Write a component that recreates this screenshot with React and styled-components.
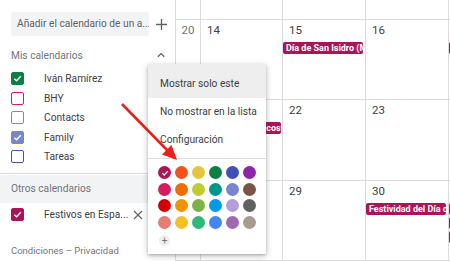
import styled, { createGlobalStyle } from "styled-components";

const GlobalStyle = createGlobalStyle`
  html, body {
    margin: 0;
    padding: 0;
    background: #fff;
    font-family: Roboto, "Noto Sans", Arial, sans-serif;
  }
`;

const myCalendars = [
  { name: "Iván Ramírez", color: "#0b8043", checked: true },
  { name: "BHY", color: "#d81b60", checked: false },
  { name: "Contacts", color: "#7986cb", checked: false },
  { name: "Family", color: "#7986cb", checked: true },
  { name: "Tareas", color: "#3f51b5", checked: false },
];

const palette = [
  "#ad1457", "#f4511e", "#e4c441", "#0b8043", "#3f51b5", "#8e24aa",
  "#d81b60", "#ef6c00", "#c0ca33", "#009688", "#7986cb", "#795548",
  "#d50000", "#f09300", "#7cb342", "#039be5", "#b39ddb", "#616161",
  "#e67c73", "#f6bf26", "#33b679", "#4285f4", "#9e69af", "#a79b8e",
];

// rows of the month grid: week number + 4 visible days
const weeks = [
  { height: 20, week: "", days: [{}, {}, {}, {}] },
  {
    height: 80,
    week: "20",
    days: [
      { num: "14" },
      { num: "15", events: ["Día de San Isidro (Madrid)"] },
      { num: "16" },
      { num: "17", events: ["Día de las Letras Gallegas"] },
    ],
  },
  {
    height: 81,
    week: "21",
    days: [
      { num: "21", events: ["Lunes de Pentecostés"] },
      { num: "22" },
      { num: "23" },
      { num: "24" },
    ],
  },
  {
    height: 80,
    week: "22",
    days: [
      { num: "28" },
      { num: "29" },
      { num: "30", events: ["Festividad del Día de Canarias"] },
      { num: "31", events: ["Corpus Christi", "Día de Castilla-La Mancha", "Corpus Christi (Castilla)"] },
    ],
  },
];

const Page = styled.div`
  position: relative;
  display: flex;
  width: 450px;
  height: 261px;
  overflow: hidden;
  background: #fff;
`;

const Sidebar = styled.div`
  display: flex;
  flex-direction: column;
  width: 175px;
  flex-shrink: 0;
`;

const SearchRow = styled.div`
  display: flex;
  align-items: center;
  gap: 7px;
  padding: 12px 0 0 11px;
`;

const SearchBox = styled.div`
  width: 138px;
  height: 24px;
  box-sizing: border-box;
  padding-left: 6px;
  background: #f1f3f4;
  border-radius: 2px;
  color: #5f6368;
  font-size: 10.2px;
  line-height: 24px;
  white-space: nowrap;
  overflow: hidden;
`;

const SectionHeader = styled.div`
  display: flex;
  align-items: center;
  justify-content: space-between;
  height: 26px;
  padding: 0 10px 0 11px;
  margin-top: 6px;
  color: #70757a;
  font-size: 10.2px;
  background: ${({ $shaded }) => ($shaded ? "#f1f3f4" : "transparent")};
`;

const CalList = styled.div`
  display: flex;
  flex-direction: column;
  padding-top: 1px;
`;

const CalRow = styled.div`
  display: flex;
  align-items: center;
  height: 19.5px;
  padding: 0 0 0 11px;
  color: #3c4043;
  font-size: 10.2px;
`;

const CalName = styled.span`
  margin-left: 20px;
  white-space: nowrap;
`;

const Box = styled.span`
  display: flex;
  align-items: center;
  justify-content: center;
  width: 13px;
  height: 13px;
  flex-shrink: 0;
  box-sizing: border-box;
  border-radius: 2px;
  border: 1.6px solid ${({ $color }) => $color};
  background: ${({ $checked, $color }) => ($checked ? $color : "#fff")};
`;

const Divider = styled.div`
  height: 1px;
  background: #dadce0;
  margin-top: 6px;
  width: 148px;
`;

const OtherHeader = styled(SectionHeader)`
  margin-top: 1px;
  height: 28px;
`;

const FestRow = styled(CalRow)`
  margin-top: 1px;
  height: 22px;
`;

const CloseSlot = styled.span`
  display: flex;
  margin-left: 5px;
`;

const Footer = styled.div`
  margin-top: auto;
  padding: 0 0 5px 11px;
  color: #70757a;
  font-size: 9.5px;
`;

const Grid = styled.div`
  display: grid;
  grid-template-columns: 25px 82px 83px 83px 83px;
  grid-auto-rows: min-content;
  border-left: 1px solid #dadce0;
  flex-shrink: 0;
`;

const Cell = styled.div`
  box-sizing: border-box;
  height: ${({ $h }) => $h}px;
  border-right: 1px solid #dadce0;
  border-bottom: 1px solid #dadce0;
  overflow: hidden;
`;

const WeekNum = styled.div`
  text-align: center;
  padding-top: 2px;
  font-size: 11.5px;
  line-height: 16px;
  color: #70757a;
`;

const DayNum = styled.div`
  padding: 2px 0 0 6px;
  font-size: 11.5px;
  line-height: 16px;
  color: #3c4043;
`;

const Events = styled.div`
  display: flex;
  flex-direction: column;
  gap: 2px;
  margin-top: 4px;
`;

const Chip = styled.div`
  width: 80px;
  height: 12px;
  box-sizing: border-box;
  padding-left: 3px;
  background: #ad1457;
  border-radius: 2px;
  color: #fff;
  font-size: 9px;
  font-weight: 700;
  line-height: 12px;
  white-space: nowrap;
  overflow: hidden;
`;

const Menu = styled.div`
  position: absolute;
  left: 148px;
  top: 64px;
  width: 118px;
  height: 190px;
  background: #fff;
  box-shadow: 0 2px 6px rgba(60, 64, 67, 0.35), 0 1px 2px rgba(60, 64, 67, 0.2);
  display: flex;
  flex-direction: column;
`;

const MenuItem = styled.div`
  height: 28px;
  line-height: 28px;
  padding: ${({ $first }) => ($first ? "6px" : "0")} 0 0 12px;
  background: ${({ $active }) => ($active ? "#eeeeee" : "transparent")};
  color: #3c4043;
  font-size: 10.2px;
  white-space: nowrap;
`;

const MenuDivider = styled.div`
  height: 1px;
  background: #dadce0;
  margin-top: 4px;
`;

const Swatches = styled.div`
  display: grid;
  grid-template-columns: repeat(6, 13px);
  column-gap: 4px;
  row-gap: 3.5px;
  padding: 7px 0 0 10px;
`;

const Swatch = styled.div`
  width: 13px;
  height: 13px;
  border-radius: 50%;
  background: ${({ $color }) => $color};
  display: flex;
  align-items: center;
  justify-content: center;
`;

const AddSwatch = styled.div`
  width: 11px;
  height: 11px;
  margin: 6px 0 0 11px;
  border-radius: 50%;
  background: #eeeeee;
  color: #70757a;
  font-size: 10px;
  line-height: 11px;
  text-align: center;
`;

const Overlay = styled.svg`
  position: absolute;
  left: 0;
  top: 0;
  pointer-events: none;
`;

const Check = ({ size = 9 }) => (
  <svg width={size} height={size} viewBox="0 0 10 10">
    <polyline points="1.5,5.2 4,7.6 8.6,2.6" fill="none" stroke="#fff" strokeWidth="1.6" />
  </svg>
);

const Plus = () => (
  <svg width="11" height="11" viewBox="0 0 11 11">
    <path d="M5.5 0v11M0 5.5h11" stroke="#5f6368" strokeWidth="1.3" />
  </svg>
);

const ChevronUp = () => (
  <svg width="8" height="6" viewBox="0 0 8 6">
    <polyline points="0.8,4.8 4,1.6 7.2,4.8" fill="none" stroke="#5f6368" strokeWidth="1.3" />
  </svg>
);

const Close = () => (
  <svg width="10" height="10" viewBox="0 0 10 10">
    <path d="M1 1l8 8M9 1l-8 8" stroke="#5f6368" strokeWidth="1.2" />
  </svg>
);

const App = () => (
  <>
    <GlobalStyle />
    <Page>
      <Sidebar>
        <SearchRow>
          <SearchBox>Añadir el calendario de un a...</SearchBox>
          <Plus />
        </SearchRow>
        <SectionHeader>
          <span>Mis calendarios</span>
          <ChevronUp />
        </SectionHeader>
        <CalList>
          {myCalendars.map((c) => (
            <CalRow key={c.name}>
              <Box $color={c.color} $checked={c.checked}>
                {c.checked && <Check />}
              </Box>
              <CalName>{c.name}</CalName>
            </CalRow>
          ))}
        </CalList>
        <Divider />
        <OtherHeader $shaded>
          <span>Otros calendarios</span>
        </OtherHeader>
        <FestRow>
          <Box $color="#ad1457" $checked>
            <Check />
          </Box>
          <CalName>Festivos en Espa...</CalName>
          <CloseSlot>
            <Close />
          </CloseSlot>
        </FestRow>
        <Footer>Condiciones – Privacidad</Footer>
      </Sidebar>

      <Grid>
        {weeks.map((w, i) => [
          <Cell key={`w${i}`} $h={w.height}>
            <WeekNum>{w.week}</WeekNum>
          </Cell>,
          ...w.days.map((d, j) => (
            <Cell key={`d${i}-${j}`} $h={w.height}>
              {d.num && <DayNum>{d.num}</DayNum>}
              {d.events && (
                <Events>
                  {d.events.map((e) => (
                    <Chip key={e}>{e}</Chip>
                  ))}
                </Events>
              )}
            </Cell>
          )),
        ])}
      </Grid>

      <Menu>
        <MenuItem $first $active>Mostrar solo este</MenuItem>
        <MenuItem>No mostrar en la lista</MenuItem>
        <MenuItem>Configuración</MenuItem>
        <MenuDivider />
        <Swatches>
          {palette.map((c, i) => (
            <Swatch key={c} $color={c}>
              {i === 0 && <Check size={8} />}
            </Swatch>
          ))}
        </Swatches>
        <AddSwatch>+</AddSwatch>
      </Menu>

      <Overlay width="450" height="261">
        <line x1="122" y1="104" x2="169" y2="152" stroke="#e8201a" strokeWidth="2.6" />
        <polygon points="177,160 162,154.5 171.5,145" fill="#e8201a" />
      </Overlay>
    </Page>
  </>
);

export default App;
